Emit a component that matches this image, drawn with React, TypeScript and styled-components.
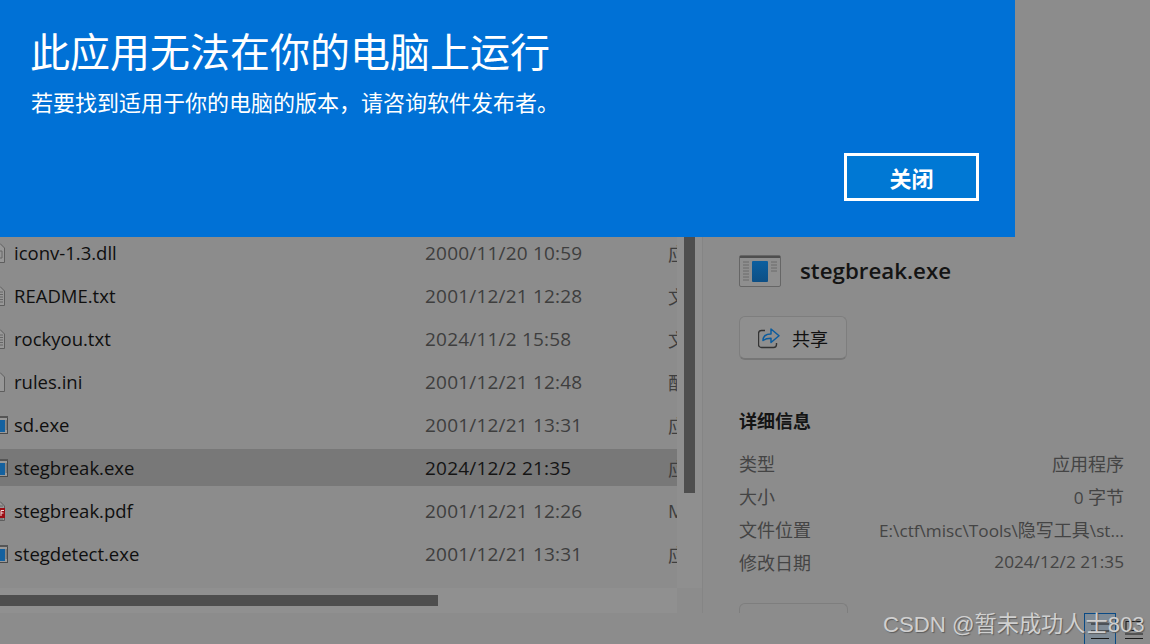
import React from "react";
import styled, { createGlobalStyle } from "styled-components";

const Global = createGlobalStyle`
  html, body { margin: 0; padding: 0; background: #8c8c8c; }
  * { box-sizing: border-box; }
`;
const cjk = `"Open Sans", "Noto Sans CJK SC", sans-serif`;

const Page = styled.div`
  position: relative; width: 1150px; height: 644px; overflow: hidden;
  background: #8c8c8c; font-family: ${cjk};
`;
const Explorer = styled.div`
  display: grid; grid-template-columns: 703px 1fr; height: 613px;
`;
const ListPane = styled.div`
  display: grid; grid-template-columns: 677px 25px; grid-template-rows: 588px 25px;
  border-right: 1px solid #858585;
`;
const Rows = styled.div`
  display: flex; flex-direction: column; gap: 6px; padding-top: 234px; overflow: hidden;
`;
const Row = styled.div<{ $selected?: boolean }>`
  display: grid; grid-template-columns: 425px 243px 1fr; align-items: center; flex: 0 0 37px;
  background: ${p => (p.$selected ? "#787878" : "transparent")};
`;
const NameCell = styled.div`
  display: flex; align-items: center; margin-left: -10px; font-size: 18.5px; color: #0f0f0f; white-space: nowrap;
`;
const DateCell = styled.div<{ $selected?: boolean }>`
  font-size: 19px; letter-spacing: 0.2px; color: ${p => (p.$selected ? "#141414" : "#3e3e3e")}; white-space: nowrap;
`;
const TypeCell = styled.div`
  font-size: 18.5px; color: #3e3e3e; overflow: hidden; white-space: nowrap; width: 12px;
`;
const VTrack = styled.div`
  background: #8f8f8f; padding: 237px 7px 0; display: flex; flex-direction: column;
`;
const VThumb = styled.div`
  width: 11px; height: 256px; background: #4e4e4e;
`;
const HTrack = styled.div`
  background: #909090; padding: 7px 0 0;
`;
const HThumb = styled.div`
  width: 438px; height: 11px; background: #4e4e4e;
`;
const Corner = styled.div``;

const Details = styled.div`
  display: flex; flex-direction: column; padding: 254px 26px 0 36px;
`;
const Head = styled.div`
  display: flex; align-items: center; gap: 19px; height: 34px; margin-bottom: 28px;
`;
const HeadName = styled.div`
  font-size: 22.3px; font-weight: 600; color: #141414; padding-bottom: 2px;
`;
const ShareButton = styled.div`
  display: flex; align-items: center; gap: 12px; width: 108px; height: 44px; padding-left: 18px;
  border: 1px solid #7e7e7e; border-bottom: 2px solid #767676; border-radius: 6px;
  background: #8f8f8f; font-size: 18px; color: #111;
`;
const SectionTitle = styled.div`
  margin-top: 49px; font-size: 18px; font-weight: 700; color: #141414; line-height: 24px;
`;
const Props = styled.div`
  display: grid; grid-template-columns: 1fr auto; grid-auto-rows: 33px; margin-top: 13px;
  font-size: 18px; color: #444; align-items: center;
`;
const PropLabel = styled.div``;
const PropValue = styled.div`
  text-align: right; white-space: nowrap; font-size: 17.2px;
`;
const CjkRun = styled.span`
  font-size: 18px;
`;
const Ghost = styled.div`
  margin-top: 25px; width: 109px; height: 10px; border: 1px solid #7e7e7e; border-bottom: 0; border-radius: 6px 6px 0 0;
`;

const Dialog = styled.div`
  position: absolute; left: 0; top: 0; width: 1015px; height: 237px; background: #0071d6; color: #fff;
  display: flex; flex-direction: column; padding: 24px 36px 36px 31px;
`;
const Title = styled.h1`
  margin: 0 0 0 -1px; font-size: 40px; font-weight: 400; line-height: 56px; white-space: nowrap;
`;
const Sub = styled.p`
  margin: -2px 0 0; font-size: 22px; line-height: 48px; white-space: nowrap;
`;
const Footer = styled.div`
  margin-top: auto; display: flex; justify-content: flex-end;
`;
const CloseButton = styled.button`
  width: 135px; height: 48px; border: 3px solid #fff; background: #0078d4; color: #fff;
  font: 700 22px ${cjk}; padding: 0;
`;
const Watermark = styled.div`
  position: absolute; left: 883px; top: 606px; font: 22.2px "Liberation Sans", "Noto Sans CJK SC", sans-serif;
  color: #d0d0d0; text-shadow: 1px 1px 1px #5c5c5c; white-space: nowrap;
`;
const ViewToggle = styled.div`
  position: absolute; left: 1084px; top: 613px; display: flex; gap: 2px; align-items: flex-start;
`;
const ViewButton = styled.div<{ $active?: boolean }>`
  width: 32px; height: 31px; display: flex; align-items: flex-start; justify-content: center; padding-top: 7px;
  border: 1px solid ${p => (p.$active ? "#0a4a85" : "transparent")};
  border-bottom: 0;
  background: ${p => (p.$active ? "#7f8b96" : "transparent")};
`;

type Kind = "dll" | "txt" | "ini" | "exe" | "pdf";

const FileIcon = ({ kind }: { kind: Kind }) => (
  <svg width="24" height="24" viewBox="0 0 24 24" fill="none">
    {kind === "exe" ? (
      <>
        <rect x="0.5" y="3.5" width="17" height="17" fill="#999" stroke="#4a4a4a" />
        <rect x="0" y="3" width="18" height="2" fill="#555" />
        <rect x="6" y="7" width="9" height="12" fill="#14619f" />
        <path d="M15.500 8h1.500M15.500 10h1.500M15.500 12h1.500M15.500 14h1.500M15.500 16h1.500" stroke="#555" />
      </>
    ) : (
      <>
        <path d="M0.500 2.500H10L14.500 7V21.500H0.500Z" fill="#979797" stroke="#5e5e5e" />
        {kind === "txt" && <path d="M2 8h11M2 10.500h11M2 13h11M2 15.500h11M2 18h11" stroke="#666" />}
        {kind === "dll" && <path d="M3 10h9v7H3z" stroke="#666" />}
        {kind === "pdf" && (
          <>
            <path d="M2 7h11M2 20h11" stroke="#666" />
            <rect x="4" y="9" width="11" height="10" fill="#9c0d14" />
            <path d="M11 11.500h3M11 11.500v5.500M11 14h2.500" stroke="#f2dede" />
          </>
        )}
      </>
    )}
  </svg>
);

const AppIcon = () => (
  <svg width="42" height="32" viewBox="0 0 42 32" fill="none">
    <defs>
      <linearGradient id="appBlue" x1="0" y1="0" x2="0" y2="1">
        <stop offset="0" stopColor="#0c5f9f" />
        <stop offset="1" stopColor="#0d4f85" />
      </linearGradient>
    </defs>
    <rect x="0.5" y="0.5" width="41" height="31" rx="1.5" fill="#8f8f8f" stroke="#666" />
    <rect x="1" y="1" width="40" height="2" fill="#4e4e4e" />
    <path d="M4 7h6M4 10h6M4 13h6M4 16h6M4 19h6M4 22h6M4 25h6M32 7h6M32 10h6M32 13h6M32 16h6" stroke="#6a6a6a" />
    <rect x="13" y="6" width="16" height="21" rx="1" fill="url(#appBlue)" />
  </svg>
);

const ShareIcon = () => (
  <svg width="22" height="22" viewBox="0 0 22 22" fill="none">
    <path d="M7 3.500H3.500a3 3 0 0 0-3 3v11a3 3 0 0 0 3 3h12a3 3 0 0 0 3-3v-1.500" stroke="#333" strokeWidth="1.4" />
    <path d="M5 13.500c0-4.200 3-6.600 8-6.600V2l8 6.800-8 6.700v-4.300c-3.300 0-6 .8-8 2.300Z" stroke="#0b5c9e" strokeWidth="1.5" strokeLinejoin="round" />
  </svg>
);

const DetailsViewIcon = () => (
  <svg width="20" height="24" viewBox="0 0 20 24" fill="none" stroke="#1a1a1a" strokeWidth="1.1">
    <path d="M1 3h18M1 10h18M1 17.500h18" />
  </svg>
);
const TilesViewIcon = () => (
  <svg width="20" height="24" viewBox="0 0 20 24" fill="none" stroke="#1a1a1a" strokeWidth="1.1">
    <path d="M2 0.500h16v9H2zM1 13h18M1 17.500h18" />
  </svg>
);

const files: { name: string; date: string; type: string; kind: Kind; selected?: boolean }[] = [
  { name: "iconv-1.3.dll", date: "2000/11/20 10:59", type: "应", kind: "dll" },
  { name: "README.txt", date: "2001/12/21 12:28", type: "文", kind: "txt" },
  { name: "rockyou.txt", date: "2024/11/2 15:58", type: "文", kind: "txt" },
  { name: "rules.ini", date: "2001/12/21 12:48", type: "配", kind: "ini" },
  { name: "sd.exe", date: "2001/12/21 13:31", type: "应", kind: "exe" },
  { name: "stegbreak.exe", date: "2024/12/2 21:35", type: "应", kind: "exe", selected: true },
  { name: "stegbreak.pdf", date: "2001/12/21 12:26", type: "M", kind: "pdf" },
  { name: "stegdetect.exe", date: "2001/12/21 13:31", type: "应", kind: "exe" },
];

const props: [string, React.ReactNode][] = [
  ["类型", <CjkRun>应用程序</CjkRun>],
  ["大小", <>0 <CjkRun>字节</CjkRun></>],
  ["文件位置", <>E:\ctf\misc\Tools\<CjkRun>隐写工具</CjkRun>\st...</>],
  ["修改日期", "2024/12/2 21:35"],
];

export default function App() {
  return (
    <Page>
      <Global />
      <Explorer>
        <ListPane>
          <Rows>
            {files.map(f => (
              <Row key={f.name} $selected={f.selected}>
                <NameCell>
                  <FileIcon kind={f.kind} />
                  {f.name}
                </NameCell>
                <DateCell $selected={f.selected}>{f.date}</DateCell>
                <TypeCell>{f.type}</TypeCell>
              </Row>
            ))}
          </Rows>
          <VTrack>
            <VThumb />
          </VTrack>
          <HTrack>
            <HThumb />
          </HTrack>
          <Corner />
        </ListPane>
        <Details>
          <Head>
            <AppIcon />
            <HeadName>stegbreak.exe</HeadName>
          </Head>
          <ShareButton>
            <ShareIcon />
            共享
          </ShareButton>
          <SectionTitle>详细信息</SectionTitle>
          <Props>
            {props.map(([k, v]) => (
              <React.Fragment key={k}>
                <PropLabel>{k}</PropLabel>
                <PropValue>{v}</PropValue>
              </React.Fragment>
            ))}
          </Props>
          <Ghost />
        </Details>
      </Explorer>
      <ViewToggle>
        <ViewButton $active>
          <DetailsViewIcon />
        </ViewButton>
        <ViewButton>
          <TilesViewIcon />
        </ViewButton>
      </ViewToggle>
      <Watermark>CSDN @暂未成功人士803</Watermark>
      <Dialog>
        <Title>此应用无法在你的电脑上运行</Title>
        <Sub>若要找到适用于你的电脑的版本，请咨询软件发布者。</Sub>
        <Footer>
          <CloseButton>关闭</CloseButton>
        </Footer>
      </Dialog>
    </Page>
  );
}
